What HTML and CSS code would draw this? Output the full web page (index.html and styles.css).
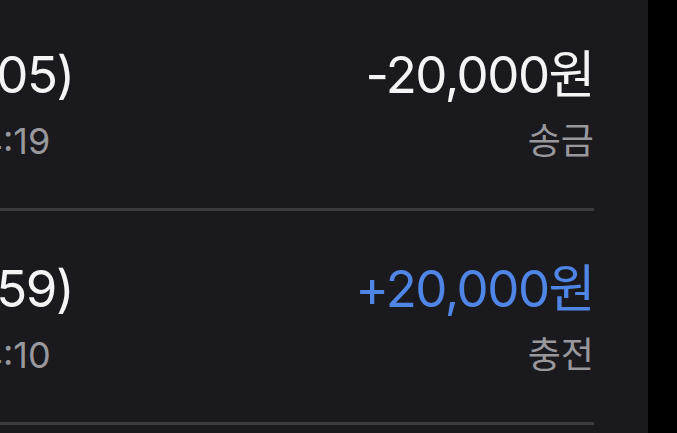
FILE: index.html
```html
<!DOCTYPE html>
<html lang="ko">
<head>
  <meta charset="utf-8">
  <title>거래내역</title>
  <link rel="stylesheet" href="styles.css">
</head>
<body>
  <div class="sheet">
    <div class="history">
      <div class="tx">
        <div class="tx-info">
          <div class="tx-title">(302-05)</div>
          <div class="tx-time">03.15 14:19</div>
        </div>
        <div class="tx-side">
          <div class="tx-amount">-20,000원</div>
          <div class="tx-kind">송금</div>
        </div>
      </div>
      <div class="tx">
        <div class="tx-info">
          <div class="tx-title">(302-59)</div>
          <div class="tx-time">03.15 14:10</div>
        </div>
        <div class="tx-side">
          <div class="tx-amount plus">+20,000원</div>
          <div class="tx-kind">충전</div>
        </div>
      </div>
    </div>
  </div>
</body>
</html>
```

FILE: styles.css
```css
body {
  margin: 0;
  background: #000;
  overflow: hidden;
  font-family: Inter, "Noto Sans CJK KR", sans-serif;
}
.sheet {
  width: 648px;
  height: 433px;
  background: #1a191d;
  overflow: hidden;
}
.history {
  margin-top: -3px;
  margin-left: -133px;
  width: 727px;
}
.tx {
  display: flex;
  justify-content: space-between;
  padding: 48px 0 45px;
  border-bottom: 3px solid #3b3a3e;
  white-space: nowrap;
}
.tx-title, .tx-amount {
  font-size: 51px;
  line-height: 60px;
  letter-spacing: -1.5px;
  color: #f4f4f5;
}
.tx-time, .tx-kind {
  margin-top: 14px;
  font-size: 36px;
  line-height: 44px;
  color: #98989d;
}
.tx-side {
  text-align: right;
}
.tx-amount.plus {
  color: #4f86e6;
}
```
